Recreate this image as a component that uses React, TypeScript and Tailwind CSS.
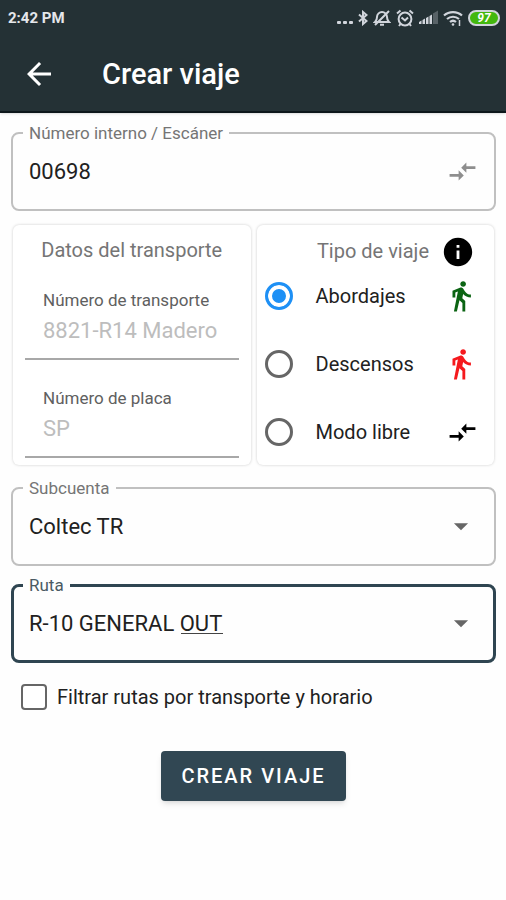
import { useState, type ReactNode } from "react";
import {
  MdArrowBack,
  MdArrowDropDown,
  MdCompareArrows,
  MdDirectionsWalk,
  MdInfo,
} from "react-icons/md";

function StatusBar() {
  return (
    <div className="flex h-9 items-center justify-between pr-1.5 pl-2 text-white">
      <span className="text-[15px] font-bold text-gray-200">2:42 PM</span>
      <div className="flex items-center gap-[5px] text-gray-300">
        <svg width="16" height="16" viewBox="0 0 16 16" fill="currentColor" aria-hidden="true">
          <rect x="0" y="11" width="4" height="3" rx="1" />
          <rect x="6" y="11" width="4" height="3" rx="1" />
          <rect x="12" y="11" width="4" height="3" rx="1" />
        </svg>
        <svg width="10" height="16" viewBox="0 0 10 16" fill="none" stroke="currentColor" strokeWidth="2" aria-hidden="true">
          <path d="M1 4.500 8.500 11 5 14V2l3.500 3L1 11.500" />
        </svg>
        <svg width="18" height="18" viewBox="0 0 18 18" fill="none" stroke="currentColor" strokeWidth="2" aria-hidden="true">
          <path d="M2 13h14c-1.400-1.200-2-2.500-2-5C14 5 11.500 3 9 3S4 5 4 8c0 2.500-.6 3.800-2 5Z" />
          <path d="M7 15.800h4M2 16 16 2" />
        </svg>
        <svg width="18" height="18" viewBox="0 0 18 18" fill="none" stroke="currentColor" strokeWidth="2" aria-hidden="true">
          <circle cx="9" cy="10" r="6.400" />
          <path d="M5.500 8.500 9 11.500l3-3M1 4.500l3.500-3M17 4.500l-3.500-3M4.500 15l-1.500 2M13.500 15l1.500 2" />
        </svg>
        <svg width="19" height="16" viewBox="0 0 19 16" fill="currentColor" aria-hidden="true">
          <path d="M0 14v-2l2.500-1.500V14zM3.500 14v-4L6 8.500V14zM7 14V8l2.500-1.500V14zM10.500 14V6L13 4.500V14z" />
          <path d="M14 14V3.500L19 .5V14z" opacity=".3" />
        </svg>
        <svg width="20" height="18" viewBox="0 0 20 18" fill="none" stroke="currentColor" strokeWidth="2.200" aria-hidden="true">
          <path d="M1 6.500c5-4.600 13-4.600 18 0M4 10c3.400-3 8.600-3 12 0M7 13c1.800-1.500 4.200-1.500 6 0" />
          <circle cx="10" cy="15.500" r="1.300" fill="currentColor" stroke="none" />
          <path d="M16.500 11v6" strokeWidth="1.500" />
        </svg>
        <span className="flex h-4 w-8 items-center justify-center rounded-full border-2 border-gray-300 bg-[#43b80f] text-[12px] leading-none font-bold text-white italic">
          97
        </span>
      </div>
    </div>
  );
}

type OutlinedProps = { id: string; label: string; focused?: boolean; children: ReactNode };

function Outlined({ id, label, focused = false, children }: OutlinedProps) {
  return (
    <fieldset
      className={
        focused
          ? "rounded-lg border-[3px] border-[#2f4551] px-[9px] pb-[9px]"
          : "rounded-lg border-2 border-[#c0c0c0] px-2.5 pb-2.5"
      }
    >
      <legend className={focused ? "px-1.5 text-[17px] leading-5 text-[#4a5a63]" : "px-1.5 text-[17px] leading-5 text-[#757575]"}>
        <label htmlFor={id}>{label}</label>
      </legend>
      <div className="relative flex h-14 items-center px-1.5">{children}</div>
    </fieldset>
  );
}

function TransportField({ id, label, value }: { id: string; label: string; value: string }) {
  return (
    <div className="flex flex-col border-b-2 border-[#a8a8a8] px-[18px] pb-3">
      <label htmlFor={id} className="text-[17px] leading-7 text-[#606060]">
        {label}
      </label>
      <input id={id} value={value} disabled className="h-8 w-full bg-transparent text-[22px] text-[#bdbdbd]" />
    </div>
  );
}

const tripTypes = [
  { id: "abordajes", label: "Abordajes", icon: <MdDirectionsWalk size={34} className="text-[#0b6413]" /> },
  { id: "descensos", label: "Descensos", icon: <MdDirectionsWalk size={34} className="text-[#f5191d]" /> },
  { id: "libre", label: "Modo libre", icon: <MdCompareArrows size={31} className="text-black" /> },
];

export default function App() {
  const [trip, setTrip] = useState("abordajes");
  const [route, setRoute] = useState("R-10 GENERAL OUT");

  return (
    <div className="min-h-screen bg-[#fefefe] font-[Roboto,sans-serif] text-[#212121]">
      <header className="border-b-2 border-[#0d171b] bg-[#243135] shadow-sm">
        <StatusBar />
        <div className="flex h-[75px] items-center gap-[45px] px-[21px]">
          <button type="button" aria-label="Volver" className="text-white">
            <MdArrowBack size={36} />
          </button>
          <h1 className="pt-0.5 text-[29px] font-medium text-white">Crear viaje</h1>
        </div>
      </header>

      <main className="pt-2.5 pr-2.5 pl-[11px]">
        <form onSubmit={(e) => e.preventDefault()}>
          <Outlined id="interno" label="Número interno / Escáner">
            <input id="interno" defaultValue="00698" className="min-w-0 flex-1 bg-transparent text-[22px] outline-none" />
            <button type="button" aria-label="Escanear">
              <MdCompareArrows size={31} className="text-[#8e8e8e]" />
            </button>
          </Outlined>

          <div className="mx-0.5 mt-3.5 grid grid-cols-2 gap-1.5">
            <section className="rounded-md bg-white px-3 pt-[11px] shadow-[0_0_3px_rgba(0,0,0,0.2)]">
              <h2 className="text-center text-[20px] leading-7 text-[#757575]">Datos del transporte</h2>
              <div className="mt-[22px] flex flex-col gap-6">
                <TransportField id="transporte" label="Número de transporte" value="8821-R14 Madero" />
                <TransportField id="placa" label="Número de placa" value="SP" />
              </div>
            </section>

            <section className="rounded-md bg-white pt-[13px] pr-4 pb-[3px] pl-2 shadow-[0_0_3px_rgba(0,0,0,0.2)]">
              <div className="flex h-7 items-center justify-end gap-3">
                <h2 className="pb-0.5 text-[20px] leading-7 text-[#757575]">Tipo de viaje</h2>
                <button type="button" aria-label="Información" className="mr-[3px]">
                  <MdInfo size={34} className="text-black" />
                </button>
              </div>
              <div className="flex flex-col gap-2">
                {tripTypes.map((t) => (
                  <label key={t.id} className="flex h-15 items-center">
                    <input
                      type="radio"
                      name="tipo"
                      checked={trip === t.id}
                      onChange={() => setTrip(t.id)}
                      className="size-7 shrink-0 appearance-none rounded-full border-3 border-[#666] bg-white checked:border-[#1e90f5] checked:bg-[#1e90f5] checked:shadow-[inset_0_0_0_4px_white]"
                    />
                    <span className="flex-1 pl-[23px] text-[20px]">{t.label}</span>
                    {t.icon}
                  </label>
                ))}
              </div>
            </section>
          </div>

          <div className="mt-[13px] flex flex-col gap-[9px]">
            <Outlined id="subcuenta" label="Subcuenta">
              <select id="subcuenta" className="min-w-0 flex-1 appearance-none bg-transparent text-[22px] outline-none">
                <option>Coltec TR</option>
              </select>
              <MdArrowDropDown size={34} className="pointer-events-none text-[#666]" />
            </Outlined>
            <Outlined id="ruta" label="Ruta" focused>
              <select
                id="ruta"
                value={route}
                onChange={(e) => setRoute(e.target.value)}
                className="min-w-0 flex-1 appearance-none bg-transparent text-[22px] outline-none"
              >
                <option>R-10 GENERAL OUT</option>
              </select>
              <span aria-hidden="true" className="pointer-events-none absolute top-[38px] left-[158px] h-px w-[42px] bg-[#444]" />
              <MdArrowDropDown size={34} className="pointer-events-none text-[#666]" />
            </Outlined>
          </div>

          <label className="mt-5 ml-2.5 flex items-center gap-2.5 text-[20px] leading-7">
            <input type="checkbox" className="size-[26px] shrink-0 appearance-none rounded-sm border-2 border-[#666] bg-white checked:bg-[#2f4551]" />
            Filtrar rutas por transporte y horario
          </label>

          <div className="mt-10 flex justify-center">
            <button
              type="submit"
              className="h-[50px] rounded bg-[#314753] px-5 text-[20px] font-medium tracking-widest text-white shadow-md"
            >
              CREAR VIAJE
            </button>
          </div>
        </form>
      </main>
    </div>
  );
}
